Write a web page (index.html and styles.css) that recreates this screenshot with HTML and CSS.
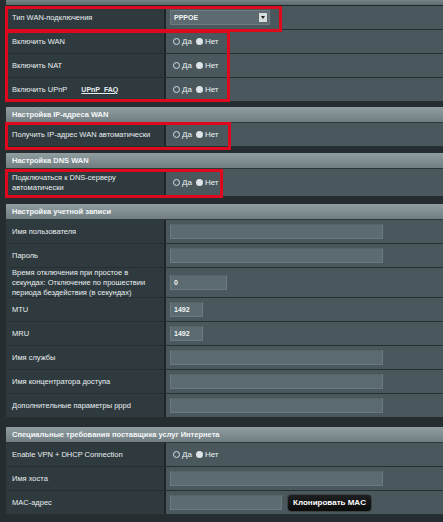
FILE: index.html
```html
<!DOCTYPE html>
<html lang="ru">
<head>
<meta charset="utf-8">
<link rel="stylesheet" href="styles.css">
</head>
<body>
<div class="page">
  <div class="topbar"></div>
  <div class="section">
    <div class="row"><div class="label">Тип WAN-подключения</div><div class="value"><div class="select"><span>PPPOE</span><span class="arrow"></span></div></div></div>
    <div class="row"><div class="label">Включить WAN</div><div class="value"><span class="radio on"></span><span class="rt">Да</span><span class="radio off"></span><span class="rt">Нет</span></div></div>
    <div class="row"><div class="label">Включить NAT</div><div class="value"><span class="radio on"></span><span class="rt">Да</span><span class="radio off"></span><span class="rt">Нет</span></div></div>
    <div class="row"><div class="label">Включить UPnP <a class="faq">UPnP&nbsp;&nbsp;FAQ</a></div><div class="value"><span class="radio on"></span><span class="rt">Да</span><span class="radio off"></span><span class="rt">Нет</span></div></div>
  </div>

  <div class="section gap5">
    <div class="head">Настройка IP-адреса WAN</div>
    <div class="row"><div class="label">Получить IP-адрес WAN автоматически</div><div class="value"><span class="radio on"></span><span class="rt">Да</span><span class="radio off"></span><span class="rt">Нет</span></div></div>
  </div>

  <div class="section gap6">
    <div class="head">Настройка DNS WAN</div>
    <div class="row tall28"><div class="label">Подключаться к DNS-серверу<br>автоматически</div><div class="value"><span class="radio on"></span><span class="rt">Да</span><span class="radio off"></span><span class="rt">Нет</span></div></div>
  </div>

  <div class="section gap7">
    <div class="head">Настройка учетной записи</div>
    <div class="row"><div class="label">Имя пользователя</div><div class="value"><div class="input long"></div></div></div>
    <div class="row"><div class="label">Пароль</div><div class="value"><div class="input long"></div></div></div>
    <div class="row tall30"><div class="label">Время отключения при простое в<br>секундах: Отключение по прошествии<br>периода бездействия (в секундах)</div><div class="value"><div class="input w57">0</div></div></div>
    <div class="row"><div class="label">MTU</div><div class="value"><div class="input w33">1492</div></div></div>
    <div class="row"><div class="label">MRU</div><div class="value"><div class="input w33">1492</div></div></div>
    <div class="row"><div class="label">Имя службы</div><div class="value"><div class="input long"></div></div></div>
    <div class="row"><div class="label">Имя концентратора доступа</div><div class="value"><div class="input long"></div></div></div>
    <div class="row"><div class="label">Дополнительные параметры pppd</div><div class="value"><div class="input long"></div></div></div>
  </div>

  <div class="section gap9">
    <div class="head">Специальные требования поставщика услуг Интернета</div>
    <div class="row"><div class="label">Enable VPN + DHCP Connection</div><div class="value"><span class="radio on"></span><span class="rt">Да</span><span class="radio off"></span><span class="rt">Нет</span></div></div>
    <div class="row"><div class="label">Имя хоста</div><div class="value"><div class="input long"></div></div></div>
    <div class="row"><div class="label">MAC-адрес</div><div class="value"><div class="input w112"></div><button class="btn">Клонировать MAC</button></div></div>
  </div>

  <div class="mark m1"></div>
  <div class="mark m2"></div>
  <div class="mark m3"></div>
  <div class="mark m4"></div>
</div>
</body>
</html>
```

FILE: styles.css
```css
html, body {
  margin: 0;
  padding: 0;
  background: #252d30;
}
.page {
  position: relative;
  width: 443px;
  height: 522px;
  overflow: hidden;
  padding-left: 6px;
  box-sizing: border-box;
  font-family: "Liberation Sans", Arial, sans-serif;
  font-size: 7.5px;
  color: #e9eff1;
}
.topbar {
  height: 5px;
  background: linear-gradient(#768387, #5c696d);
  border-bottom: 1px solid #1f2629;
}
.section {
  display: flex;
  flex-direction: column;
}
.gap5 { margin-top: 5px; }
.gap6 { margin-top: 6px; }
.gap7 { margin-top: 7px; }
.gap9 { margin-top: 9px; }
.head {
  height: 16px;
  box-sizing: border-box;
  padding: 3px 0 0 6px;
  background: linear-gradient(#909da1, #707d81);
  border-bottom: 1px solid #2c3538;
  color: #f4f7f8;
  font-weight: bold;
  font-size: 7.5px;
  white-space: nowrap;
}
.row {
  display: flex;
  height: 24px;
  box-sizing: border-box;
  border-bottom: 1px solid #262f32;
}
.row.tall28 { height: 28px; }
.row.tall30 { height: 30px; }
.label {
  width: 160px;
  flex: none;
  box-sizing: border-box;
  padding-left: 6px;
  background: #2f3a3e;
  border-right: 2px solid #1e2528;
  display: flex;
  align-items: center;
  line-height: 10px;
}
.value {
  flex: 1;
  background: #4a585d;
  display: flex;
  align-items: center;
  padding-left: 4px;
}
.faq {
  margin-left: 14px;
  text-decoration: underline;
  font-size: 7px;
  font-weight: bold;
  color: #e9eff1;
}
.radio {
  width: 7px;
  height: 7px;
  border-radius: 50%;
  box-sizing: border-box;
  flex: none;
}
.radio.on {
  margin-left: 3px;
  border: 1.5px solid #cfe3ea;
  background: #4a585d;
}
.radio.off {
  margin-left: 4px;
  background: #dfe4e6;
}
.rt {
  margin-left: 2px;
  font-size: 8px;
  color: #eef2f3;
}
.select {
  width: 100px;
  height: 15px;
  box-sizing: border-box;
  background: #5d6b70;
  border: 1px solid #6d7b80;
  display: flex;
  align-items: center;
  justify-content: space-between;
  padding: 0 2px 0 3px;
  font-size: 7px;
  font-weight: bold;
  color: #f2f5f6;
}
.arrow {
  width: 8px;
  height: 9px;
  background: #d7dcde;
  position: relative;
}
.arrow::after {
  content: "";
  position: absolute;
  left: 2px;
  top: 3px;
  border-left: 2px solid transparent;
  border-right: 2px solid transparent;
  border-top: 3px solid #222;
}
.input {
  height: 15px;
  box-sizing: border-box;
  background: #5c6b70;
  border: 1px solid #6b7a7f;
  border-top-color: #56646a;
  padding-left: 3px;
  display: flex;
  align-items: center;
  font-size: 7px;
  font-weight: bold;
  color: #f2f5f6;
}
.input.long { width: 213px; }
.input.w57 { width: 57px; }
.input.w33 { width: 33px; }
.input.w112 { width: 112px; }
.btn {
  margin-left: 5px;
  width: 85px;
  height: 18px;
  border: 1px solid #3a4245;
  border-radius: 4px;
  background: linear-gradient(#1d1f20, #0a0b0b);
  color: #ffffff;
  font-family: "Liberation Sans", Arial, sans-serif;
  font-size: 8px;
  font-weight: bold;
  padding: 0;
}
.mark {
  position: absolute;
  border: 3px solid #dc0a1c;
  box-sizing: border-box;
}
.m1 { left: 5px; top: 6px; width: 277px; height: 26px; }
.m2 { left: 5px; top: 30px; width: 225px; height: 72px; }
.m3 { left: 5px; top: 122px; width: 226px; height: 28px; }
.m4 { left: 5px; top: 169px; width: 218px; height: 29px; }
```
